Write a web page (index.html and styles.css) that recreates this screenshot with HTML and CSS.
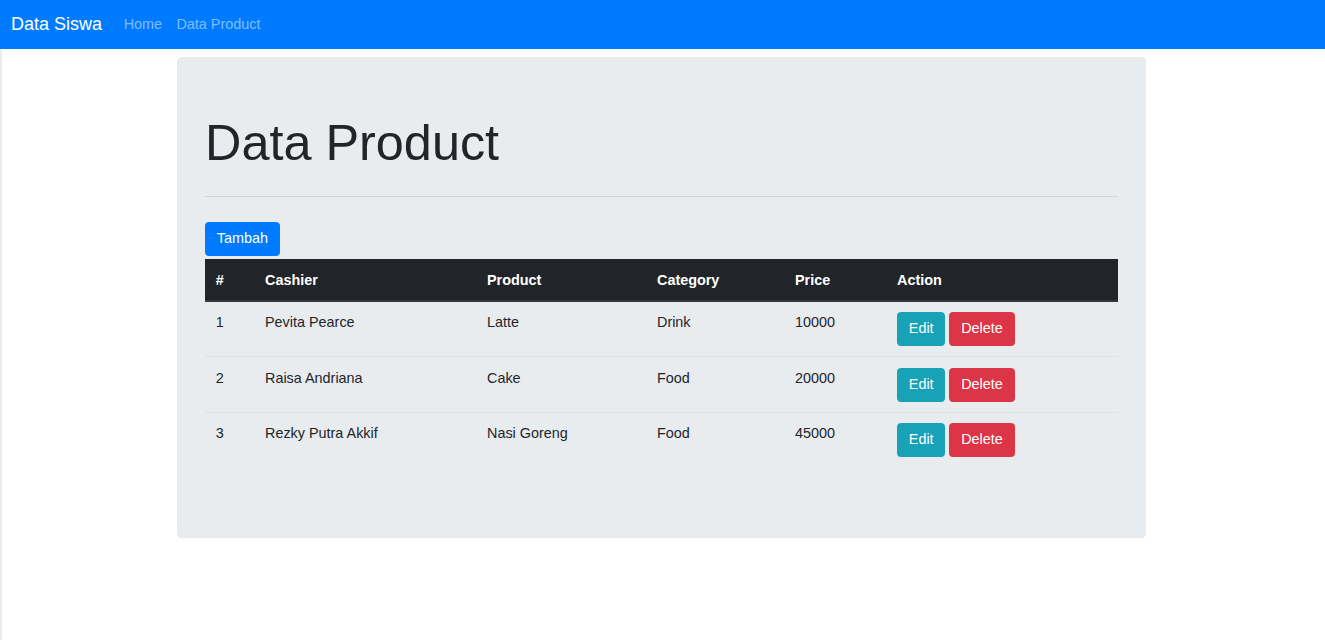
FILE: index.html
```html
<!DOCTYPE html>
<html lang="id">
<head>
<meta charset="utf-8">
<title>Data Product</title>
<link rel="stylesheet" href="styles.css">
</head>
<body>
<nav class="navbar">
  <a class="brand" href="#">Data Siswa</a>
  <ul class="nav">
    <li><a class="nav-link" href="#">Home</a></li>
    <li><a class="nav-link" href="#">Data Product</a></li>
  </ul>
</nav>
<div class="page">
  <main class="container">
    <section class="jumbotron">
      <h1 class="display">Data Product</h1>
      <hr class="divider">
      <a class="btn btn-primary tambah" href="#">Tambah</a>
      <table class="table">
        <colgroup>
          <col class="c-no">
          <col class="c-cashier">
          <col class="c-product">
          <col class="c-category">
          <col class="c-price">
          <col class="c-action">
        </colgroup>
        <thead>
          <tr>
            <th>#</th>
            <th>Cashier</th>
            <th>Product</th>
            <th>Category</th>
            <th>Price</th>
            <th>Action</th>
          </tr>
        </thead>
        <tbody>
          <tr>
            <td>1</td><td>Pevita Pearce</td><td>Latte</td><td>Drink</td><td>10000</td>
            <td><a class="btn btn-info" href="#">Edit</a> <a class="btn btn-danger" href="#">Delete</a></td>
          </tr>
          <tr>
            <td>2</td><td>Raisa Andriana</td><td>Cake</td><td>Food</td><td>20000</td>
            <td><a class="btn btn-info" href="#">Edit</a> <a class="btn btn-danger" href="#">Delete</a></td>
          </tr>
          <tr>
            <td>3</td><td>Rezky Putra Akkif</td><td>Nasi Goreng</td><td>Food</td><td>45000</td>
            <td><a class="btn btn-info" href="#">Edit</a> <a class="btn btn-danger" href="#">Delete</a></td>
          </tr>
        </tbody>
      </table>
    </section>
  </main>
</div>
</body>
</html>
```
FILE: styles.css
```css
* { box-sizing: border-box; }
html, body { margin: 0; padding: 0; }
body {
  font-family: "Liberation Sans", Arial, sans-serif;
  font-size: 14.4px;
  line-height: 1.5;
  color: #212529;
  background: linear-gradient(to right, #e6e6e6 0, #f6f6f6 2px, #fff 3px);
  min-height: 640px;
}
a { text-decoration: none; }

.navbar {
  display: flex;
  align-items: center;
  background: #007bff;
  padding: 0 11px;
  height: 49px;
}
.brand {
  color: #fff;
  font-size: 18px;
  line-height: 27px;
  margin-right: 14.4px;
}
.nav {
  display: flex;
  list-style: none;
  margin: 0;
  padding: 0;
}
.nav-link {
  display: block;
  color: rgba(255,255,255,.5);
  line-height: 21.6px;
  padding: 0 7.2px;
}

.page { padding-right: 2px; }
.container {
  width: 969px;
  margin: 8px auto 0;
}
.jumbotron {
  background: #e9ecef;
  border-radius: 4.5px;
  padding: 56.3px 28px 56.5px;
}
.display {
  font-size: 50.4px;
  font-weight: 400;
  line-height: 1.2;
  margin: 0;
}
.divider {
  border: 0;
  border-top: 1px solid rgba(0,0,0,.1);
  margin: 22px 0 25.5px;
}
.btn {
  display: inline-block;
  color: #fff;
  font-size: 14.4px;
  line-height: 21.6px;
  padding: 5.1px 10.8px;
  border: 1px solid transparent;
  border-radius: 3.6px;
  vertical-align: middle;
}
.btn-primary { background: #007bff; border-color: #007bff; }
.btn-info { background: #17a2b8; border-color: #17a2b8; }
.btn-danger { background: #dc3545; border-color: #dc3545; }
.tambah { margin-bottom: 3.2px; }

.table {
  width: 100%;
  table-layout: fixed;
  border-collapse: collapse;
  margin-bottom: 14.4px;
}
.table th, .table td {
  text-align: left;
  vertical-align: top;
  padding: 10.4px 10.8px;
}
.table td { border-top: 1px solid #dee2e6; }
.table thead th {
  background: #212529;
  color: #fff;
  font-weight: 700;
  padding-top: 11px;
  padding-bottom: 8px;
  border-bottom: 2px solid #32383e;
}
.table tbody tr:first-child td { border-top: 0; }
.c-no { width: 49.2px; }
.c-cashier { width: 222px; }
.c-product { width: 170px; }
.c-category { width: 138px; }
.c-price { width: 102px; }
.c-action { width: auto; }
```
